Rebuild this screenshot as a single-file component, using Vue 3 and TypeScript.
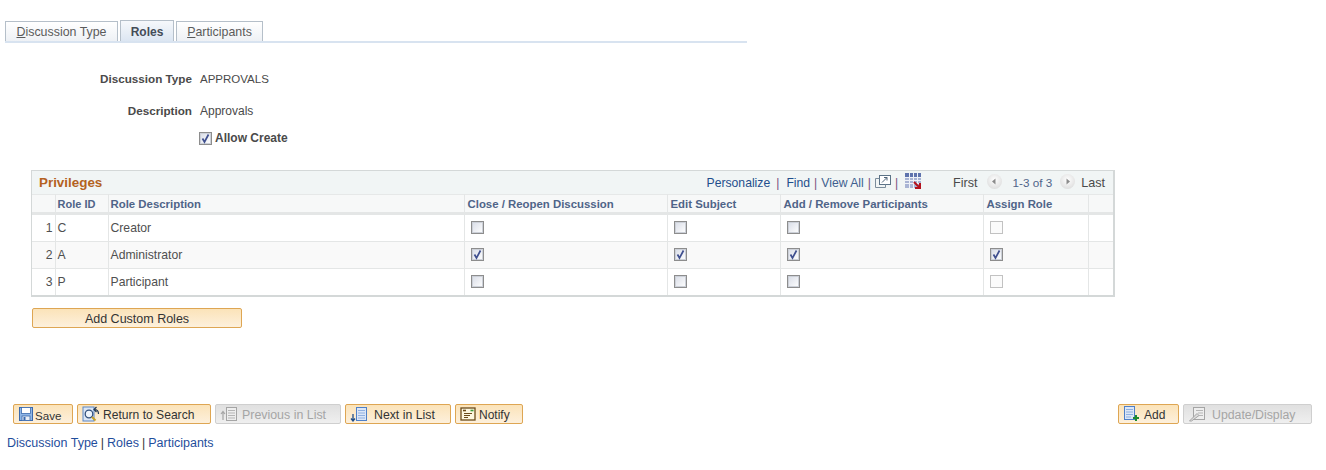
<script setup lang="ts">
interface Row {
  id: string
  desc: string
  close: boolean
  edit: boolean
  addRemove: boolean
  assign: boolean
  assignDisabled: boolean
}

const rows: Row[] = [
  { id: 'C', desc: 'Creator', close: false, edit: false, addRemove: false, assign: false, assignDisabled: true },
  { id: 'A', desc: 'Administrator', close: true, edit: true, addRemove: true, assign: true, assignDisabled: false },
  { id: 'P', desc: 'Participant', close: false, edit: false, addRemove: false, assign: false, assignDisabled: true }
]

const columns = ['', 'Role ID', 'Role Description', 'Close / Reopen Discussion', 'Edit Subject', 'Add / Remove Participants', 'Assign Role', '']
</script>

<template>
  <div class="page">
    <div class="tabs">
      <div class="tab"><u>D</u>iscussion Type</div>
      <div class="tab active">Roles</div>
      <div class="tab tab-last"><u>P</u>articipants</div>
    </div>

    <div class="form">
      <div class="field field-first">
        <span class="label">Discussion Type</span>
        <span class="value value-caps">APPROVALS</span>
      </div>
      <div class="field field-second">
        <span class="label">Description</span>
        <span class="value">Approvals</span>
      </div>
      <div class="allow">
        <span class="check checked">
          <svg viewBox="0 0 11 11" width="11" height="11"><path d="M2.5 5.5 L4.5 9 L8.5 1.5" fill="none" stroke="#3f4f8f" stroke-width="1.7" /></svg>
        </span>
        <span class="allow-text">Allow Create</span>
      </div>
    </div>

    <div class="grid">
      <div class="grid-title">
        <span class="title">Privileges</span>
        <div class="nav">
          <span class="link">Personalize</span>
          <span class="sep sep-wide">|</span>
          <span class="link">Find</span>
          <span class="sep">|</span>
          <span class="link2">View All</span>
          <span class="sep">|</span>
          <svg class="ico-zoom" viewBox="0 0 16 13" width="16" height="13">
            <rect x="4.5" y="0.5" width="11" height="9" fill="#fff" stroke="#5b7286" />
            <path d="M4.5 3.5h-4v9h10v-3" fill="none" stroke="#7b8c9b" />
            <path d="M7 7.5 L12 2.5M9 2.5h3v3" fill="none" stroke="#4f6478" />
          </svg>
          <span class="sep sep-after">|</span>
          <svg class="ico-download" viewBox="0 0 16 16" width="16" height="16">
            <rect x="0" y="0" width="16" height="15" fill="#a9b4d4" />
            <rect x="0" y="0" width="16" height="4" fill="#5f73ad" />
            <path d="M0 4.5h16M0 7.5h16M0 10.5h16M4.5 0v15M8.5 0v15M12.5 0v15" stroke="#eef1f7" stroke-width="1" />
            <path d="M9 9 L14 14M15 10v5h-5" fill="none" stroke="#b3121d" stroke-width="2" />
          </svg>
          <span class="pager-text first">First</span>
          <span class="round">
            <svg viewBox="0 0 15 15" width="15" height="15"><path d="M8.5 4.5v6l-3.5-3z" fill="#8b8b8b" /></svg>
          </span>
          <span class="pager-text count">1-3 of 3</span>
          <span class="round round-next">
            <svg viewBox="0 0 15 15" width="15" height="15"><path d="M6.5 4.5v6l3.5-3z" fill="#8b8b8b" /></svg>
          </span>
          <span class="pager-text last">Last</span>
        </div>
      </div>

      <table class="table">
        <colgroup>
          <col class="c0" /><col class="c1" /><col class="c2" /><col class="c3" />
          <col class="c4" /><col class="c5" /><col class="c6" /><col class="c7" />
        </colgroup>
        <thead>
          <tr>
            <th v-for="(col, i) in columns" :key="i">{{ col }}</th>
          </tr>
        </thead>
        <tbody>
          <tr v-for="(row, i) in rows" :key="row.id" :class="{ odd: i === 1 }">
            <td class="num">{{ i + 1 }}</td>
            <td>{{ row.id }}</td>
            <td>{{ row.desc }}</td>
            <td v-for="(on, k) in [row.close, row.edit, row.addRemove]" :key="k">
              <span class="check" :class="{ checked: on }">
                <svg v-if="on" viewBox="0 0 11 11" width="11" height="11"><path d="M2.5 5.5 L4.5 9 L8.5 1.5" fill="none" stroke="#3f4f8f" stroke-width="1.7" /></svg>
              </span>
            </td>
            <td>
              <span class="check" :class="{ checked: row.assign, disabled: row.assignDisabled }">
                <svg v-if="row.assign" viewBox="0 0 11 11" width="11" height="11"><path d="M2.5 5.5 L4.5 9 L8.5 1.5" fill="none" stroke="#3f4f8f" stroke-width="1.7" /></svg>
              </span>
            </td>
            <td></td>
          </tr>
        </tbody>
      </table>
    </div>

    <button class="btn btn-custom" type="button">Add Custom Roles</button>

    <div class="toolbar">
      <div class="group">
        <button class="btn btn-save" type="button">
          <svg viewBox="0 0 16 16" width="16" height="16">
            <rect x="1.5" y="1.5" width="13" height="13" fill="#8fb6e6" stroke="#3a69ad" />
            <rect x="3.5" y="1.5" width="9" height="6" fill="#fff" stroke="#3a69ad" stroke-width=".8" />
            <rect x="4" y="10" width="8" height="4.5" fill="#e9eef6" stroke="#3a69ad" stroke-width=".8" />
            <rect x="5.5" y="11" width="2" height="3" fill="#3a69ad" />
          </svg>
          <span>Save</span>
        </button>
        <button class="btn btn-return" type="button">
          <svg viewBox="0 0 19 16" width="19" height="16">
            <rect x="1" y="1" width="11" height="14" fill="#dbe6f5" stroke="#5a86c4" />
            <circle cx="7" cy="8" r="3.8" fill="#eef4fb" stroke="#34517d" stroke-width="1.3" />
            <path d="M10 11 L13.5 14.5" stroke="#c9a227" stroke-width="2" />
            <path d="M16.5 8C16.5 5 15 3.5 12.5 3.5M14.5 1 L12 3.5 L14.5 6" fill="none" stroke="#1f3552" stroke-width="1.2" />
          </svg>
          <span>Return to Search</span>
        </button>
        <button class="btn btn-prev disabled" type="button">
          <svg viewBox="0 0 18 16" width="18" height="16">
            <path d="M3 14V6M1 8 L3 5.5 L5 8" fill="none" stroke="#a5a5a5" stroke-width="1.2" />
            <rect x="6.5" y="1.5" width="10" height="13" fill="#eee" stroke="#a5a5a5" />
            <path d="M8 4.5h7M8 7h7M8 9.5h7M8 12h7" stroke="#b5b5b5" />
          </svg>
          <span>Previous in List</span>
        </button>
        <button class="btn btn-next" type="button">
          <svg viewBox="0 0 18 16" width="18" height="16">
            <path d="M3 8v7M1 12.5 L3 15 L5 12.5" fill="none" stroke="#1f4e8a" stroke-width="1.3" />
            <rect x="6.5" y="1.5" width="10" height="13" fill="#dbe6f7" stroke="#4f80c8" />
            <path d="M8 4.5h7M8 7h7M8 9.5h7M8 12h7" stroke="#8fb0e0" />
          </svg>
          <span>Next in List</span>
        </button>
        <button class="btn btn-notify" type="button">
          <svg viewBox="0 0 16 14" width="16" height="14">
            <rect x="1" y="1" width="14" height="12" fill="#fdf6df" stroke="#6b4a1a" stroke-width="1.3" />
            <path d="M3 3.5h3" stroke="#6b4a1a" stroke-width="1.6" />
            <path d="M10.5 3.5h3" stroke="#3d9a3d" stroke-width="1.6" />
            <path d="M4 6.5h8M4 8.5h6M4 10.5h4" stroke="#6b4a1a" />
          </svg>
          <span>Notify</span>
        </button>
      </div>
      <div class="group">
        <button class="btn btn-add" type="button">
          <svg viewBox="0 0 18 16" width="18" height="16">
            <rect x="1.5" y="0.5" width="10" height="13" fill="#dbe6f7" stroke="#4f80c8" />
            <path d="M3 3.5h7M3 6h7M3 8.5h7M3 11h5" stroke="#8fb0e0" />
            <path d="M13 9v6M10 12h6" stroke="#1e8a2e" stroke-width="2" />
          </svg>
          <span>Add</span>
        </button>
        <button class="btn btn-update disabled" type="button">
          <svg viewBox="0 0 18 16" width="18" height="16">
            <rect x="5.5" y="1.5" width="11" height="12" fill="#eee" stroke="#a5a5a5" />
            <path d="M8 4.5h7M10 7h5M11 9.5h4" stroke="#b5b5b5" />
            <path d="M1.5 15 L9 7.5 L11 9.5 L3.5 15z" fill="#ddd" stroke="#a5a5a5" />
          </svg>
          <span>Update/Display</span>
        </button>
      </div>
    </div>

    <div class="footer">
      <span>Discussion Type</span><i>|</i><span>Roles</span><i>|</i><span>Participants</span>
    </div>
  </div>
</template>

<style scoped>
.page {
  width: 1326px;
  height: 470px;
  box-sizing: border-box;
  padding-top: 20px;
  overflow: hidden;
  font-family: "Liberation Sans", Arial, sans-serif;
  font-size: 12px;
  color: #444;
  background: #fff;
}

.tabs {
  display: flex;
  align-items: flex-end;
  gap: 2px;
  width: 742px;
  height: 21px;
  margin-left: 5px;
  border-bottom: 2px solid #d8e3f0;
}

.tab {
  box-sizing: border-box;
  height: 20px;
  width: 113px;
  padding-top: 3px;
  font-size: 12.4px;
  text-align: center;
  color: #5b5b5b;
  border: 1px solid #b5bfc9;
  border-bottom: none;
  background: linear-gradient(#fff, #eef1f5);
}

.tab-last {
  width: 87px;
}

.tab.active {
  height: 21px;
  width: 54px;
  padding-top: 4px;
  font-size: 12px;
  font-weight: bold;
  color: #444c58;
  background: linear-gradient(#f6f8fb, #dce6f2);
}

.form {
  height: 127px;
}

.field {
  display: flex;
  gap: 8px;
  line-height: 14px;
}

.field-first {
  padding-top: 29px;
}

.field-second {
  padding-top: 18px;
}

.label {
  width: 192px;
  text-align: right;
  font-size: 11.7px;
  font-weight: bold;
  color: #4a4a4a;
}

.value {
  color: #4a4a4a;
}

.value-caps {
  font-size: 11.5px;
}

.allow {
  display: flex;
  align-items: center;
  padding: 13px 0 0 199px;
  gap: 3px;
}

.allow-text {
  font-weight: bold;
  color: #4a4a4a;
}

.check {
  display: inline-block;
  box-sizing: border-box;
  width: 13px;
  height: 13px;
  border: 1px solid #8d8d8d;
  box-shadow: inset 0 0 0 1px #ccd0d8;
  background: linear-gradient(135deg, #d8dce6, #fff);
  vertical-align: middle;
}

.check svg {
  display: block;
}

.check.disabled {
  border-color: #c2c2c2;
  box-shadow: none;
  background: #fbfbfb;
}

.grid {
  box-sizing: border-box;
  width: 1084px;
  margin-left: 31px;
  border: 2px solid #d4d8d8;
  border-top-width: 1px;
  border-left-width: 1px;
  background: #fff;
}

.grid-title {
  display: flex;
  align-items: center;
  justify-content: space-between;
  height: 23px;
  padding: 0 8px 0 7px;
  background: #f1f5f5;
}

.title {
  font-size: 13.4px;
  font-weight: bold;
  color: #b4621f;
}

.nav {
  display: flex;
  align-items: center;
  font-size: 12.2px;
  color: #4a4a4a;
}

.link {
  color: #1f4e8c;
}

.link2 {
  color: #3f5f8f;
}

.sep {
  margin: 0 4px;
  color: #7a4f80;
}

.sep-wide {
  margin: 0 7px 0 6px;
}

.ico-zoom {
  margin: -2px 0 0 0;
}

.sep-after {
  margin-left: 4px;
  margin-right: 7px;
}

.ico-download {
  margin-top: -4px;
}

.pager-text {
  font-size: 12.6px;
  color: #4a4a4a;
}

.first {
  margin-left: 32px;
}

.count {
  font-size: 11.7px;
  color: #4f6488;
  margin: 0 8px 0 11px;
}

.last {
  margin-left: 6px;
}

.round {
  width: 15px;
  height: 15px;
  margin: -3px 0 0 9px;
  border-radius: 50%;
  background: radial-gradient(circle at 50% 40%, #fff, #d5d5d5);
}

.round-next {
  margin-left: 0;
}

.round svg {
  display: block;
}

.table {
  width: 100%;
  table-layout: fixed;
  border-collapse: collapse;
}

.c0 { width: 23px; }
.c1 { width: 53px; }
.c2 { width: 356px; }
.c3 { width: 203px; }
.c4 { width: 113px; }
.c5 { width: 203px; }
.c6 { width: 105px; }

th {
  height: 17px;
  padding: 0 0 0 2px;
  font-size: 11.4px;
  text-align: left;
  color: #4f6488;
  background: #f7f8f8;
  border-top: 1px solid #e6e8e8;
  border-right: 1px solid #e4e6e6;
  border-bottom: 3px solid #e4e6e6;
}

th:nth-child(2) {
  font-size: 11px;
}

th:nth-child(n + 4) {
  padding-left: 3px;
}

td {
  height: 26px;
  padding: 0 0 0 2px;
  font-size: 12.2px;
  color: #4f4f4f;
  border-right: 1px solid #e4e6e6;
  border-bottom: 1px solid #e4e6e6;
}

td .check {
  margin: 0 0 2px 4px;
}

th:last-child,
td:last-child {
  border-right: none;
}

tbody tr:last-child td {
  border-bottom: none;
}

.odd td {
  background: #f9f9f9;
}

.num {
  padding: 0 2px 0 0;
  text-align: right;
}

.btn {
  display: inline-flex;
  align-items: center;
  box-sizing: border-box;
  height: 20px;
  padding: 0 0 0 4px;
  font-family: inherit;
  font-size: 12px;
  color: #333;
  border: 1px solid #dea653;
  border-radius: 2px;
  background: linear-gradient(#fbe3b9, #fdf0dc);
}

.btn span {
  padding-top: 2px;
}

.btn svg {
  flex: none;
}

.btn.disabled {
  color: #a5a5a5;
  border-color: #cfcfcf;
  background: linear-gradient(#e0e0e0, #efefef);
}

.btn-custom {
  justify-content: center;
  width: 210px;
  margin: 11px 0 0 32px;
  padding: 2px 0 0;
  display: flex;
  font-size: 12.5px;
}

.toolbar {
  display: flex;
  justify-content: space-between;
  padding: 76px 14px 0 13px;
}

.group {
  display: flex;
  gap: 4px;
}

.btn-save { width: 60px; }
.btn-save span { margin-left: 1px; font-size: 11.6px; }
.btn-return { width: 134px; }
.btn-return span { margin-left: 2px; font-size: 12.1px; }
.btn-prev { width: 126px; }
.btn-prev span { margin-left: 4px; font-size: 12.4px; }
.btn-next { width: 106px; }
.btn-next span { margin-left: 6px; font-size: 12.3px; }
.btn-notify { width: 68px; }
.btn-notify span { margin-left: 3px; }
.btn-add { width: 61px; }
.btn-add span { margin-left: 3px; }
.btn-update { width: 129px; }
.btn-update span { margin-left: 6px; font-size: 12.3px; }

.footer {
  padding: 12px 0 0 7px;
  font-size: 12.5px;
  color: #1f4e9c;
  line-height: 14px;
}

.footer i {
  margin: 0 3px;
  font-style: normal;
  color: #333;
}
</style>
